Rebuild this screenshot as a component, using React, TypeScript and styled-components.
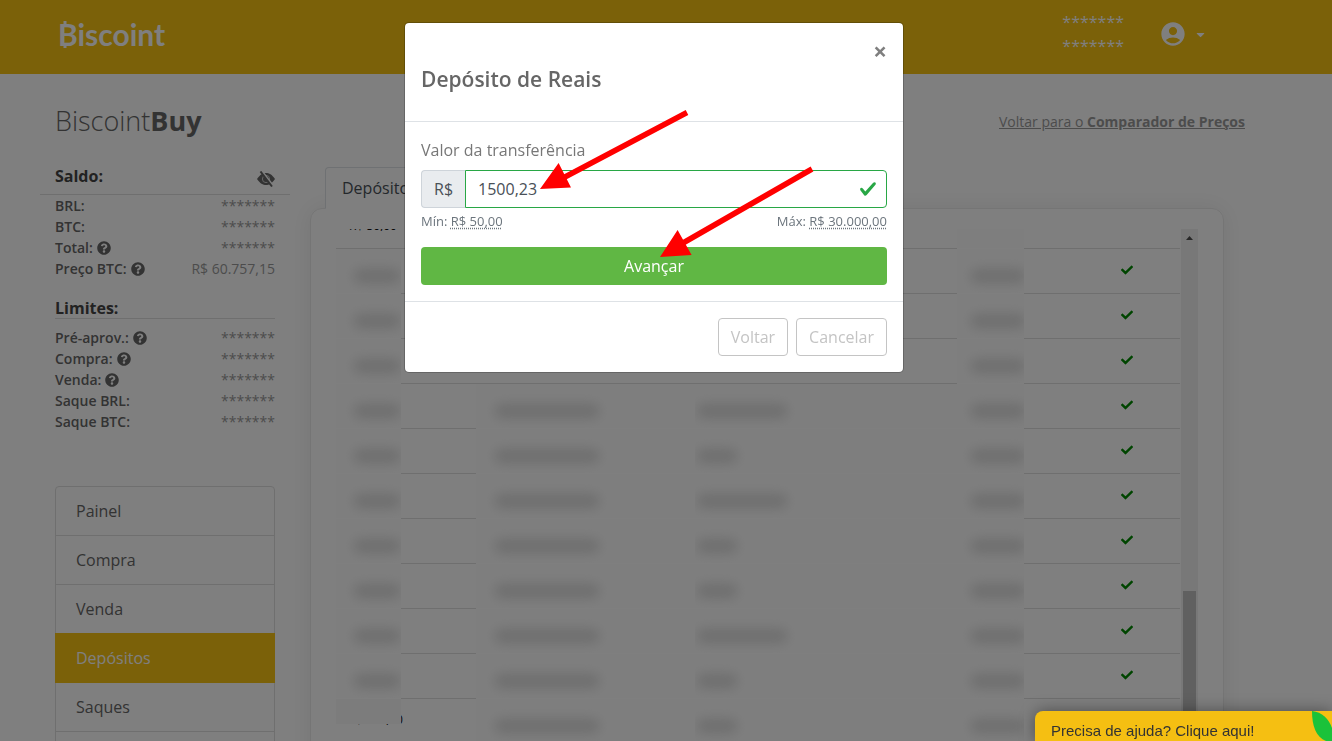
import React from "react";
import styled, { createGlobalStyle } from "styled-components";
import { FaCheck, FaQuestionCircle, FaCaretDown } from "react-icons/fa";
import { MdAccountCircle } from "react-icons/md";

const GlobalStyle = createGlobalStyle`
  *, *::before, *::after { box-sizing: border-box; }
  html, body, #root { height: 100%; }
  body {
    margin: 0;
    overflow: hidden;
    background: #fff;
    color: #666;
    font-family: "Open Sans", sans-serif;
    font-size: 16px;
    line-height: 24px;
  }
  h1, h2, h3, p, dl, dd, ul { margin: 0; padding: 0; }
  button, input { font: inherit; }
`;

const Page = styled.div`
  height: 100vh;
  overflow: hidden;
`;

const TopBar = styled.header`
  display: flex;
  align-items: center;
  justify-content: space-between;
  height: 74px;
  padding: 0 125px 6px 58px;
  background: #f6c212;
  color: #fff;
`;

const Brand = styled.a`
  display: flex;
  position: relative;
  color: #fff;
  font-family: Lato, sans-serif;
  font-size: 30px;
  font-weight: 700;
  line-height: 32px;
  text-decoration: none;
`;

const CoinTicks = styled.svg`
  position: absolute;
  left: 0;
  top: 3px;
`;

const Account = styled.div`
  display: flex;
  align-items: center;
  gap: 35px;
`;

const HiddenTotals = styled.div`
  display: flex;
  flex-direction: column;
`;

const AccountButton = styled.button`
  display: flex;
  align-items: center;
  gap: 7px;
  padding: 0;
  border: 0;
  background: none;
  color: #fff;
`;

const TitleRow = styled.div`
  display: flex;
  align-items: center;
  justify-content: space-between;
  padding: 24px 87px 0 55px;
`;

const PageTitle = styled.h1`
  font-size: 27px;
  font-weight: 300;
  line-height: 46px;
  b { font-weight: 700; }
`;

const BackLink = styled.a`
  padding-top: 2px;
  color: #999;
  font-size: 14px;
  b { font-weight: 700; }
`;

const Columns = styled.div`
  display: flex;
  align-items: flex-start;
  gap: 20px;
  padding: 20px 108px 0 40px;
`;

const Sidebar = styled.aside`
  flex: 0 0 250px;
`;

const BalanceHeader = styled.div`
  display: flex;
  align-items: flex-start;
  justify-content: space-between;
  height: 31px;
  padding: 0 15px;
  border-bottom: 1px solid #dedede;
`;

const Heading = styled.h2`
  color: #444;
  font-size: 16px;
  font-weight: 700;
  line-height: 24px;
`;

const IconButton = styled.button`
  display: flex;
  padding: 7px 0 0;
  border: 0;
  background: none;
  color: #666;
`;

const LimitsHeader = styled.div`
  height: 23px;
  margin: 17px 15px 8px;
  border-bottom: 1px solid #dedede;
`;

const Figures = styled.dl`
  padding: 0 15px;
`;

const Figure = styled.div`
  display: flex;
  justify-content: space-between;
  font-size: 14px;
  line-height: 21px;
`;

const FigureName = styled.dt`
  display: flex;
  align-items: center;
  gap: 4px;
  font-weight: 600;
`;

const FigureValue = styled.dd`
  color: #999;
`;

const Menu = styled.ul`
  margin: 54px 15px 0;
  border: 1px solid #dedede;
  border-radius: 4px;
  list-style: none;
`;

const MenuItem = styled.li<{ $active?: boolean }>`
  margin: ${(p) => (p.$active ? "-1px -1px 0" : "0")};
  padding: ${(p) => (p.$active ? "1px 1px 0" : "0")};
  border-bottom: 1px solid ${(p) => (p.$active ? "#f6c212" : "#dedede")};
  background: ${(p) => (p.$active ? "#f6c212" : "transparent")};
  a {
    display: block;
    padding: 12px 20px;
    color: ${(p) => (p.$active ? "#fff" : "#666")};
    text-decoration: none;
  }
`;

const Main = styled.main`
  flex: 1;
  min-width: 0;
  padding-top: 3px;
`;

const Tab = styled.button`
  display: block;
  height: 42px;
  margin: 0 0 -1px 15px;
  padding: 0 16px;
  position: relative;
  border: 1px solid #dee2e6;
  border-bottom-color: #fff;
  border-radius: 4px 4px 0 0;
  background: #fff;
  color: #495057;
`;

const Card = styled.section`
  display: flex;
  gap: 1px;
  height: 640px;
  padding: 20px 25px;
  border: 1px solid #eaeaea;
  border-radius: 12px;
  box-shadow: 0 0 24px rgba(0, 0, 0, 0.08);
`;

const History = styled.table`
  flex: 1;
  display: table;
  width: 100%;
  height: max-content;
  border-collapse: collapse;
  table-layout: fixed;
  font-size: 12px;
  line-height: 20px;
  color: #111;
`;

const Cell = styled.td<{ $masked?: boolean }>`
  height: 45px;
  padding: 0;
  border-bottom: 1px solid ${(p) => (p.$masked ? "transparent" : "#dedede")};
  background: ${(p) => (p.$masked ? "#fdfdfd" : "transparent")};
  overflow: hidden;
`;

const TopCell = styled(Cell)`
  height: 19px;
`;

const ClippedAmount = styled.div`
  height: 18px;
  padding: 0 0 0 13px;
  white-space: nowrap;
  overflow: hidden;
  span { display: block; height: 2px; overflow: hidden; }
  i { display: block; margin-top: -13px; font-style: normal; }
`;

const Smudge = styled.span<{ $w: number; $left: number }>`
  display: block;
  width: ${(p) => p.$w}px;
  height: 14px;
  margin-left: ${(p) => p.$left}px;
  margin-top: 10px;
  border-radius: 6px;
  background: #dcdcdc;
  filter: blur(6px);
`;

const StatusCell = styled(Cell)`
  padding: 0 0 3px 49px;
  color: #008a00;
  text-align: center;
  svg { display: inline-block; vertical-align: middle; }
`;

const CoveredAmount = styled.div`
  position: relative;
  width: 67px;
  height: 26px;
  margin-bottom: 18px;
  padding: 11px 0 0 12px;
  white-space: nowrap;
  line-height: 20px;
  overflow: hidden;
  &::after {
    content: "";
    position: absolute;
    inset: 0 2px 1px 0;
    background: #f8f8f8;
  }
`;

const ScrollTrack = styled.div`
  flex: 0 0 17px;
  display: flex;
  flex-direction: column;
  align-items: center;
  background: #f1f1f1;
`;

const ScrollThumb = styled.div`
  width: 13px;
  height: 200px;
  margin-top: 345px;
  background: #c1c1c1;
`;

const Backdrop = styled.div`
  position: fixed;
  inset: 0;
  display: flex;
  justify-content: center;
  align-items: flex-start;
  padding: 22px 24px 0 0;
  background: rgba(0, 0, 0, 0.5);
`;

const Dialog = styled.form`
  position: relative;
  width: 500px;
  border: 1px solid rgba(0, 0, 0, 0.2);
  border-radius: 5px;
  background: #fff;
  background-clip: padding-box;
`;

const DialogHeader = styled.div`
  display: flex;
  align-items: flex-start;
  justify-content: space-between;
  height: 99px;
  padding: 16px;
  border-bottom: 1px solid #dee2e6;
`;

const DialogTitle = styled.h2`
  padding-top: 25px;
  font-size: 21px;
  font-weight: 600;
  line-height: 30px;
`;

const CloseButton = styled.button`
  padding: 0;
  border: 0;
  background: none;
  color: #7f7f7f;
  font-size: 24px;
  font-weight: 700;
  line-height: 24px;
`;

const DialogBody = styled.div`
  padding: 16px;
`;

const FieldLabel = styled.label`
  display: block;
  margin-bottom: 8px;
  color: #777;
`;

const InputGroup = styled.div`
  display: flex;
  position: relative;
  height: 38px;
`;

const Prefix = styled.span`
  padding: 6px 12px;
  border: 1px solid #ced4da;
  border-right: 0;
  border-radius: 4px 0 0 4px;
  background: #e9ecef;
  color: #495057;
`;

const AmountInput = styled.input`
  flex: 1;
  min-width: 0;
  padding: 6px 40px 6px 12px;
  border: 1px solid #28a745;
  border-radius: 0 4px 4px 0;
  outline: 0;
  color: #495057;
`;

const ValidMark = styled.svg`
  position: absolute;
  right: 10px;
  top: 10px;
`;

const Bounds = styled.div`
  display: flex;
  justify-content: space-between;
  margin: 4px 0 16px;
  color: #6c757d;
  font-size: 13px;
  line-height: 19px;
  abbr {
    text-decoration: underline dotted;
    text-underline-offset: 2px;
  }
`;

const SubmitButton = styled.button`
  display: block;
  width: 100%;
  height: 38px;
  border: 0;
  border-radius: 4px;
  background: #60b744;
  color: #fff;
`;

const DialogFooter = styled.div`
  display: flex;
  justify-content: flex-end;
  gap: 8px;
  padding: 16px;
  border-top: 1px solid #dee2e6;
`;

const OutlineButton = styled.button`
  height: 38px;
  padding: 0 12px;
  border: 1px solid #c4c4c4;
  border-radius: 4px;
  background: #fff;
  color: #c4c4c4;
`;

const Pointers = styled.svg`
  position: absolute;
  left: 0;
  top: 0;
  pointer-events: none;
`;

const HelpWidget = styled.button`
  position: fixed;
  right: 0;
  bottom: 0;
  display: flex;
  justify-content: space-between;
  width: 297px;
  height: 30px;
  padding: 0 0 0 16px;
  border: 0;
  border-radius: 8px 0 0 0;
  background: #f5bf12;
  box-shadow: 0 0 16px rgba(0, 0, 0, 0.4);
  color: #333;
  font-family: "Liberation Sans", Arial, sans-serif;
  font-size: 15px;
  line-height: 40px;
  overflow: hidden;
  svg { flex: none; }
`;

type FigureRow = { name: string; value: string; help?: boolean };

const MASK = "*******";

const balances: FigureRow[] = [
  { name: "BRL:", value: MASK },
  { name: "BTC:", value: MASK },
  { name: "Total:", value: MASK, help: true },
  { name: "Preço BTC:", value: "R$ 60.757,15", help: true },
];

const limits: FigureRow[] = [
  { name: "Pré-aprov.:", value: MASK, help: true },
  { name: "Compra:", value: MASK, help: true },
  { name: "Venda:", value: MASK, help: true },
  { name: "Saque BRL:", value: MASK },
  { name: "Saque BTC:", value: MASK },
];

const menu = ["Painel", "Compra", "Venda", "Depósitos", "Saques", ""];

// Width of the obscured bank name in each visible row.
const bankWidths = [40, 40, 40, 90, 40, 90, 40, 40, 90, 40];

function FigureList({ rows }: { rows: FigureRow[] }) {
  return (
    <Figures>
      {rows.map((row) => (
        <Figure key={row.name}>
          <FigureName>
            {row.name}
            {row.help && <FaQuestionCircle size={14} />}
          </FigureName>
          <FigureValue>{row.value}</FigureValue>
        </Figure>
      ))}
    </Figures>
  );
}

function HistoryRow({ bank, open }: { bank: number; open: boolean }) {
  return (
    <tr>
      <Cell $masked>
        <Smudge $w={46} $left={18} />
      </Cell>
      <Cell />
      <Cell $masked={!open}>{!open && <Smudge $w={104} $left={19} />}</Cell>
      <Cell $masked={!open}>{!open && <Smudge $w={bank} $left={2} />}</Cell>
      <Cell $masked>
        <Smudge $w={54} $left={14} />
      </Cell>
      <StatusCell>
        <FaCheck size={12} />
      </StatusCell>
    </tr>
  );
}

export default function App() {
  return (
    <>
      <GlobalStyle />
      <Page>
        <TopBar>
          <Brand href="#">
            <CoinTicks width="20" height="28" viewBox="0 0 20 28" aria-hidden="true">
              <path d="M7 0v5M7 22v5" stroke="#fff" strokeWidth="3" />
            </CoinTicks>
            Biscoint
          </Brand>
          <Account>
            <HiddenTotals>
              <span>{MASK}</span>
              <span>{MASK}</span>
            </HiddenTotals>
            <AccountButton aria-label="Conta">
              <MdAccountCircle size={28} />
              <FaCaretDown size={13} />
            </AccountButton>
          </Account>
        </TopBar>
        <TitleRow>
          <PageTitle>
            Biscoint<b>Buy</b>
          </PageTitle>
          <BackLink href="#">
            Voltar para o <b>Comparador de Preços</b>
          </BackLink>
        </TitleRow>
        <Columns>
          <Sidebar>
            <BalanceHeader>
              <Heading>Saldo:</Heading>
              <IconButton aria-label="Mostrar saldo">
                <svg width="18" height="16" viewBox="0 0 18 16" aria-hidden="true">
                  <path
                    fill="currentColor"
                    d="M0 8C3 3.500 6 2 9 2s6 1.500 9 6c-3 4.500-6 6-9 6S3 12.500 0 8z"
                  />
                  <circle cx="9" cy="8" r="3.600" fill="none" stroke="#ccc" />
                  <path d="M4.500 0l11.500 15" stroke="#fff" strokeWidth="2.500" />
                  <path d="M3.500 .5L15 15.500" stroke="currentColor" strokeWidth="2" />
                </svg>
              </IconButton>
            </BalanceHeader>
            <FigureList rows={balances} />
            <LimitsHeader>
              <Heading>Limites:</Heading>
            </LimitsHeader>
            <FigureList rows={limits} />
            <Menu>
              {menu.map((item) => (
                <MenuItem key={item} $active={item === "Depósitos"}>
                  <a href="#">{item}</a>
                </MenuItem>
              ))}
            </Menu>
          </Sidebar>
          <Main>
            <Tab>Depósitos</Tab>
            <Card>
              <History>
                <colgroup>
                  <col width="65" />
                  <col width="75" />
                  <col width="219" />
                  <col />
                  <col width="67" />
                  <col width="156" />
                </colgroup>
                <tbody>
                  <tr>
                    <TopCell>
                      <ClippedAmount>
                        <span>
                          <i>R$ 50,00</i>
                        </span>
                      </ClippedAmount>
                    </TopCell>
                    <TopCell />
                    <TopCell />
                    <TopCell />
                    <TopCell $masked />
                    <TopCell />
                  </tr>
                  {bankWidths.map((bank, i) => (
                    <HistoryRow key={i} bank={bank} open={i < 3} />
                  ))}
                  <tr>
                    <Cell colSpan={2}>
                      <CoveredAmount>R$ 100,00</CoveredAmount>
                    </Cell>
                    <Cell $masked>
                      <Smudge $w={104} $left={19} />
                    </Cell>
                    <Cell $masked>
                      <Smudge $w={40} $left={2} />
                    </Cell>
                    <Cell $masked>
                      <Smudge $w={54} $left={14} />
                    </Cell>
                    <Cell />
                  </tr>
                </tbody>
              </History>
              <ScrollTrack>
                <svg width="17" height="17" viewBox="0 0 17 17" aria-hidden="true">
                  <path d="M5 11l3.500-4 3.500 4z" fill="#505050" />
                </svg>
                <ScrollThumb />
              </ScrollTrack>
            </Card>
          </Main>
        </Columns>
      </Page>

      <Backdrop>
        <Dialog role="dialog" aria-labelledby="deposit-title" onSubmit={(e) => e.preventDefault()}>
          <DialogHeader>
            <DialogTitle id="deposit-title">Depósito de Reais</DialogTitle>
            <CloseButton type="button" aria-label="Fechar">
              ×
            </CloseButton>
          </DialogHeader>
          <DialogBody>
            <FieldLabel htmlFor="amount">Valor da transferência</FieldLabel>
            <InputGroup>
              <Prefix>R$</Prefix>
              <AmountInput id="amount" defaultValue="1500,23" />
              <ValidMark width="18" height="18" viewBox="0 0 8 8" aria-hidden="true">
                <path
                  fill="#28a745"
                  d="M2.300 6.730L.6 4.530c-.4-1.040.46-1.400 1.100-.8l1.100 1.400 3.400-3.800c.6-.63 1.600-.27 1.200.7l-4 4.600c-.43.5-.8.4-1.100.1z"
                />
              </ValidMark>
            </InputGroup>
            <Bounds>
              <span>
                Mín: <abbr>R$ 50,00</abbr>
              </span>
              <span>
                Máx: <abbr>R$ 30.000,00</abbr>
              </span>
            </Bounds>
            <SubmitButton type="submit">Avançar</SubmitButton>
          </DialogBody>
          <DialogFooter>
            <OutlineButton type="button">Voltar</OutlineButton>
            <OutlineButton type="button">Cancelar</OutlineButton>
          </DialogFooter>
          <Pointers width="498" height="349" viewBox="0 0 498 349" aria-hidden="true">
            <g stroke="#f00" strokeWidth="5.500" fill="#f00">
              <path d="M282 89.500L158 155M407 146L278 220" />
              <path stroke="none" d="M135 166l18.600-26L166 164.500zM255 234l17.600-27 14 25z" />
            </g>
          </Pointers>
        </Dialog>
      </Backdrop>

      <HelpWidget>
        Precisa de ajuda? Clique aqui!
        <svg width="20" height="30" viewBox="0 0 20 30" aria-hidden="true">
          <path d="M0 0C10 1 17 8 20 17V30H14C4 26 0 15 0 0z" fill="#1bc23a" />
        </svg>
      </HelpWidget>
    </>
  );
}
